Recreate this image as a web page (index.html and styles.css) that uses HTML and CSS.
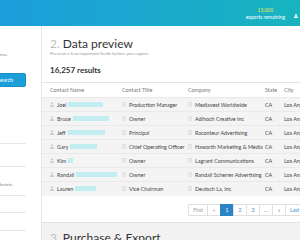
FILE: index.html
```html
<!DOCTYPE html>
<html lang="en-US">
	<head>
		<title>Export - Data preview</title>
		<link rel="stylesheet" href="styles.css">
	</head>
	<body>
		<div class="page">
			<div class="top-bar">
				<div class="quota">
					<span class="quota-num">15,000</span>
					<span class="quota-label">exports remaining</span>
				</div>
				<svg class="user-icon" viewBox="0 0 8 8" width="4" height="4">
					<circle cx="4" cy="2.2" r="2" fill="#fff"/>
					<path d="M0 8 C0 5 1.8 4.4 4 4.4 C6.2 4.4 8 5 8 8 Z" fill="#fff"/>
				</svg>
			</div>
			<div class="layout">
				<aside class="sidebar">
					<div class="sidebar-inner">
						<p class="hint">Search by company or contact name.</p>
						<button class="search-btn">Search</button>
						<ul class="filters">
							<li class="filter"></li>
							<li class="filter filter-tall"><span>Oil, Gas, Electric,</span></li>
							<li class="filter filter-short"></li>
							<li class="filter filter-mid"></li>
							<li class="filter"></li>
						</ul>
					</div>
				</aside>
				<main class="main">
					<section class="step">
						<h2 class="step-title"><span class="step-num">2.</span> Data preview</h2>
						<p class="step-sub">Preview a few important fields before you export.</p>
						<p class="results">16,257 results</p>
						<table class="preview">
							<colgroup>
								<col class="col-name">
								<col class="col-title">
								<col class="col-company">
								<col class="col-state">
								<col>
							</colgroup>
							<thead>
								<tr>
									<th>Contact Name</th>
									<th>Contact Title</th>
									<th>Company</th>
									<th>State</th>
									<th>City</th>
								</tr>
							</thead>
							<tbody id="rows"></tbody>
						</table>
						<div class="pager">
							<button class="page-btn disabled">First</button>
							<button class="page-btn disabled">&laquo;</button>
							<button class="page-btn active">1</button>
							<button class="page-btn">2</button>
							<button class="page-btn">3</button>
							<button class="page-btn">&hellip;</button>
							<button class="page-btn">&raquo;</button>
							<button class="page-btn">Last</button>
						</div>
					</section>
					<section class="step step-next">
						<h2 class="step-title"><span class="step-num">3.</span> Purchase &amp; Export</h2>
					</section>
				</main>
			</div>
		</div>

		<script>
			const rows = [
				['Joel', 35, 'Production Manager', 'Mediavest Worldwide'],
				['Bruce', 36, 'Owner', 'Adlhoch Creative Inc'],
				['Jeff', 37, 'Principal', 'Raconteur Advertising'],
				['Gary', 27, 'Chief Operating Officer', 'Haworth Marketing & Media'],
				['Kim', 5, 'Owner', 'Lagrant Communications'],
				['Randall', 41, 'Owner', 'Randall Scherrer Advertising'],
				['Lauren', 21, 'Vice Chairman', 'Deutsch La, Inc'],
			];

			const personIcon = `<svg class="cell-icon" viewBox="0 0 8 10" width="4" height="5"><circle cx="4" cy="2.6" r="2.2" fill="#cdcdcd"/><path d="M0 10 C0 6.4 1.8 5.6 4 5.6 C6.2 5.6 8 6.4 8 10 Z" fill="#cdcdcd"/></svg>`;
			const cardIcon = `<svg class="cell-icon" viewBox="0 0 8 10" width="4" height="5"><rect x="0.5" y="1" width="7" height="8" fill="none" stroke="#d4d4d4"/><path d="M2 4 H6 M2 6 H6" stroke="#d4d4d4"/></svg>`;

			const tbody = document.getElementById('rows');
			for (const [first, blur, title, company] of rows) {
				tbody.innerHTML += `<tr>
	<td><span class="cell">${personIcon}${first}<span class="blur" style="width:${blur}px"></span></span></td>
	<td><span class="cell">${cardIcon}${title}</span></td>
	<td><span class="cell">${cardIcon}${company.replace('&', '&amp;')}</span></td>
	<td>CA</td>
	<td>Los Angeles</td>
</tr>`;
			}
		</script>
	</body>
</html>
```

FILE: styles.css
```css
* {
	font-family: Lato, "Liberation Sans", sans-serif;
	box-sizing: border-box;
}
body {
	margin: 0;
	overflow: hidden;
	background: #fff;
	color: #333;
}

.page {
	width: 320px;
}

.top-bar {
	height: 26px;
	background: linear-gradient(to right, #1d9edc, #17b5bd);
	display: flex;
	flex-direction: row;
	align-items: center;
	justify-content: flex-end;
	padding-right: 22px;
}
.quota {
	display: flex;
	flex-direction: column;
	align-items: center;
	font-size: 5px;
	line-height: 7px;
	padding-top: 2px;
}
.quota-num {
	color: #f2ea4a;
}
.quota-label {
	color: #fff;
}
.user-icon {
	margin-left: 9px;
	margin-top: 5px;
}

.layout {
	display: flex;
	flex-direction: row;
	height: 214px;
}

.sidebar {
	width: 42px;
	flex-shrink: 0;
	border-right: 1px solid #e6e6e6;
	overflow: hidden;
}
.sidebar-inner {
	display: flex;
	flex-direction: column;
	align-items: flex-end;
	padding: 25px 14px 0 0;
}
.hint {
	margin: 0 19px 0 0;
	font-size: 4.6px;
	line-height: 6px;
	color: #888;
	white-space: nowrap;
}
.search-btn {
	margin: 16px 1px 0 0;
	height: 14px;
	padding: 0 12px;
	border: 1px solid #1890c6;
	border-radius: 2px;
	background: #1c9fd8;
	color: #fff;
	font-size: 5.4px;
	white-space: nowrap;
}
.filters {
	list-style: none;
	margin: 56px 1px 0 0;
	padding: 0;
	width: 90px;
}
.filter {
	height: 23px;
	border-top: 1px solid #e8e8e8;
}
.filter-tall {
	height: 29px;
	padding: 14px 13px 0 0;
	text-align: right;
	font-size: 4.6px;
	line-height: 6px;
	color: #777;
}
.filter-short {
	height: 17px;
}
.filter-mid {
	height: 18px;
}

.main {
	flex: 1;
	display: flex;
	flex-direction: column;
	min-width: 0;
}

.step {
	padding-top: 11px;
	padding-bottom: 6px;
}
.step-title {
	margin: 0 0 0 8px;
	font-size: 12px;
	line-height: 14px;
	font-weight: 400;
	color: #333;
}
.step-num {
	color: #bdbdbd;
}
.step-sub {
	margin: -1px 0 0 8px;
	font-size: 4.6px;
	line-height: 6px;
	color: #999;
}
.results {
	margin: 9px 0 0 8px;
	font-size: 8px;
	line-height: 10px;
	font-weight: bold;
	color: #333;
}

.preview {
	margin-top: 7px;
	width: 100%;
	table-layout: fixed;
	border-collapse: collapse;
	font-size: 5.4px;
	white-space: nowrap;
}
.col-name {
	width: 80px;
}
.col-title {
	width: 66px;
}
.col-company {
	width: 77px;
}
.col-state {
	width: 19px;
}
.preview th {
	height: 15px;
	text-align: left;
	font-weight: 400;
	color: #777;
	border-top: 1px solid #e4e4e4;
	padding: 0;
}
.preview td {
	height: 14px;
	padding: 0;
	color: #444;
	background: #f4f4f4;
	border-top: 1px solid #e9e9e9;
	overflow: hidden;
}
.preview th:first-child,
.preview td:first-child {
	padding-left: 8px;
}
.cell {
	display: flex;
	flex-direction: row;
	align-items: center;
}
.cell-icon {
	margin-right: 3px;
	flex-shrink: 0;
}
.blur {
	display: inline-block;
	height: 5px;
	margin-left: 2px;
	background: #c2eef1;
}

.pager {
	display: flex;
	flex-direction: row;
	justify-content: flex-end;
	margin: 8px 16px 0 0;
}
.page-btn {
	height: 12px;
	min-width: 14px;
	padding: 0 4px;
	margin-left: -1px;
	border: 1px solid #e0e0e0;
	background: #fff;
	color: #3a8fcc;
	font-size: 5px;
}
.page-btn.disabled {
	color: #999;
}
.page-btn.active {
	background: #2a84c6;
	border-color: #2a84c6;
	color: #fff;
}

.step-next {
	flex: 1;
	padding-top: 8px;
	background: #f2f2f2;
	border-top: 1px solid #e2e2e2;
}
```
